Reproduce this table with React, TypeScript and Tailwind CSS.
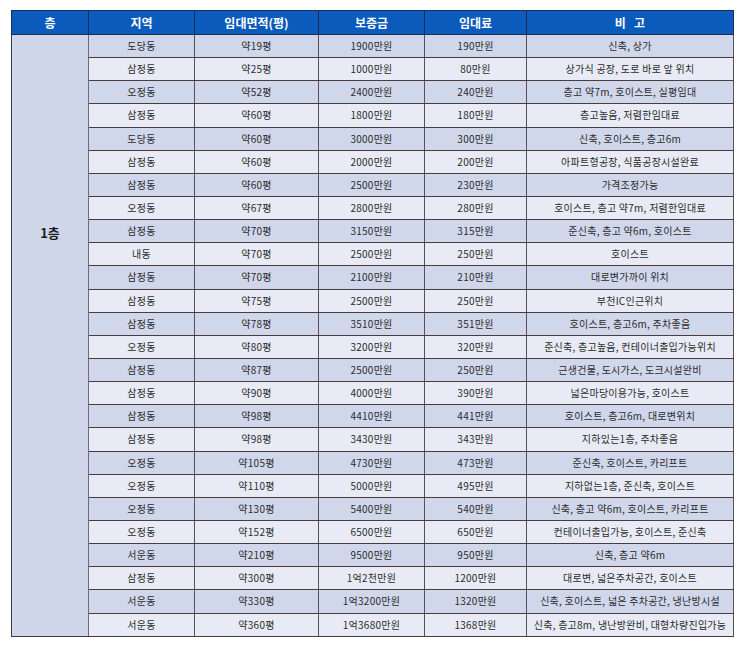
import React from "react";

const rows: [string, string, string, string, string][] = [
  ["도당동", "약19평", "1900만원", "190만원", "신축, 상가"],
  ["삼정동", "약25평", "1000만원", "80만원", "상가식 공장, 도로 바로 앞 위치"],
  ["오정동", "약52평", "2400만원", "240만원", "층고 약7m, 호이스트, 실평임대"],
  ["삼정동", "약60평", "1800만원", "180만원", "층고높음, 저렴한임대료"],
  ["도당동", "약60평", "3000만원", "300만원", "신축, 호이스트, 층고6m"],
  ["삼정동", "약60평", "2000만원", "200만원", "아파트형공장, 식품공장시설완료"],
  ["삼정동", "약60평", "2500만원", "230만원", "가격조정가능"],
  ["오정동", "약67평", "2800만원", "280만원", "호이스트, 층고 약7m, 저렴한임대료"],
  ["삼정동", "약70평", "3150만원", "315만원", "준신축, 층고 약6m, 호이스트"],
  ["내동", "약70평", "2500만원", "250만원", "호이스트"],
  ["삼정동", "약70평", "2100만원", "210만원", "대로변가까이 위치"],
  ["삼정동", "약75평", "2500만원", "250만원", "부천IC인근위치"],
  ["삼정동", "약78평", "3510만원", "351만원", "호이스트, 층고6m, 주차좋음"],
  ["오정동", "약80평", "3200만원", "320만원", "준신축, 층고높음, 컨테이너출입가능위치"],
  ["삼정동", "약87평", "2500만원", "250만원", "근생건물, 도시가스, 도크시설완비"],
  ["삼정동", "약90평", "4000만원", "390만원", "넓은마당이용가능, 호이스트"],
  ["삼정동", "약98평", "4410만원", "441만원", "호이스트, 층고6m, 대로변위치"],
  ["삼정동", "약98평", "3430만원", "343만원", "지하있는1층, 주차좋음"],
  ["오정동", "약105평", "4730만원", "473만원", "준신축, 호이스트, 카리프트"],
  ["오정동", "약110평", "5000만원", "495만원", "지하없는1층, 준신축, 호이스트"],
  ["오정동", "약130평", "5400만원", "540만원", "신축, 층고 약6m, 호이스트, 카리프트"],
  ["오정동", "약152평", "6500만원", "650만원", "컨테이너출입가능, 호이스트, 준신축"],
  ["서운동", "약210평", "9500만원", "950만원", "신축, 층고 약6m"],
  ["삼정동", "약300평", "1억2천만원", "1200만원", "대로변, 넓은주차공간, 호이스트"],
  ["서운동", "약330평", "1억3200만원", "1320만원", "신축, 호이스트, 넓은 주차공간, 냉난방시설"],
  ["서운동", "약360평", "1억3680만원", "1368만원", "신축, 층고8m, 냉난방완비, 대형차량진입가능"],
];

export default function App() {
  return (
    <div
      className="w-[743px] h-[646px] bg-white pt-[10px] pl-[11px]"
      style={{ fontFamily: '"Noto Sans CJK KR", "Noto Sans", sans-serif' }}
    >
      <table className="table-fixed border-collapse w-[722px] border border-[#3f3a48]">
        <colgroup>
          <col className="w-[77px]" />
          <col className="w-[106px]" />
          <col className="w-[124px]" />
          <col className="w-[106px]" />
          <col className="w-[102px]" />
          <col className="w-[207px]" />
        </colgroup>
        <thead>
          <tr className="h-[24px] bg-[#0b5bbd] text-white text-[12px] font-bold">
            <th className="border border-[#1d2b57] font-bold p-0 leading-none">층</th>
            <th className="border border-[#1d2b57] font-bold p-0 leading-none">지역</th>
            <th className="border border-[#1d2b57] font-bold p-0 leading-none">임대면적(평)</th>
            <th className="border border-[#1d2b57] font-bold p-0 leading-none">보증금</th>
            <th className="border border-[#1d2b57] font-bold p-0 leading-none">임대료</th>
            <th className="border border-[#1d2b57] font-bold p-0 leading-none whitespace-pre">비   고</th>
          </tr>
        </thead>
        <tbody className="text-[10px] text-[#2b2b2b] tracking-[0.25px]">
          {rows.map((r, i) => (
            <tr key={i} className={`h-[23.15px] ${i % 2 === 0 ? "bg-[#d0d7eb]" : "bg-[#e8ebf5]"}`}>
              {i === 0 && (
                <td
                  rowSpan={rows.length}
                  className="bg-[#cfd6ea] border border-[#3f3a48] border-r-[#6e6c7c] align-top text-center pt-[188px] text-[13px] font-bold text-[#1a1a1a] tracking-normal"
                >
                  1층
                </td>
              )}
              {r.map((c, j) => (
                <td
                  key={j}
                  className="border-y border-y-[#4a3c3c] border-x border-x-[#5a5058] text-center p-0 leading-none whitespace-nowrap"
                >
                  {c}
                </td>
              ))}
            </tr>
          ))}
        </tbody>
      </table>
    </div>
  );
}
